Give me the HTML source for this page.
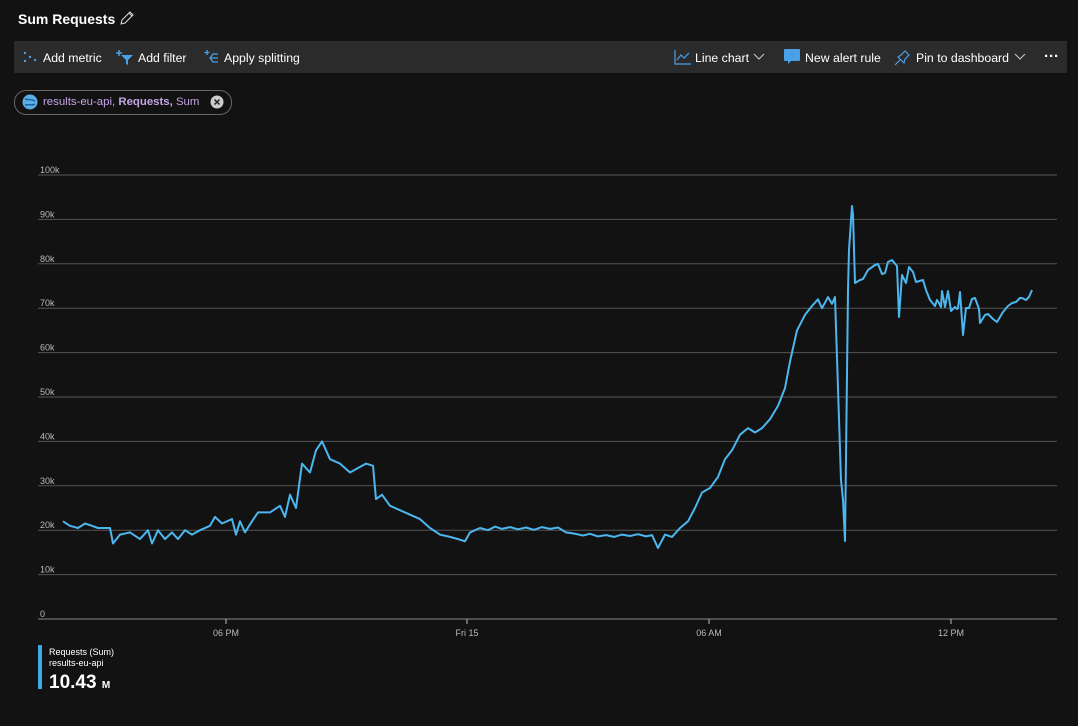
<!DOCTYPE html>
<html><head><meta charset="utf-8"><style>
body{margin:0;width:1078px;height:726px;background:#121212;font-family:"Liberation Sans",sans-serif;color:#fff;overflow:hidden;position:relative}
.title{position:absolute;left:18px;top:10px;font-size:14px;font-weight:bold}
.bar{position:absolute;left:14px;top:41px;width:1053px;height:32px;background:#2b2b2b}
.bi{position:absolute;top:10px;font-size:12.3px;color:#fff;white-space:nowrap}
.pill{position:absolute;left:14px;top:90px;width:216px;height:23px;border:1px solid #666;border-radius:12px;font-size:11.4px;color:#c5a3e6}
</style></head><body>
<div class="title">Sum Requests <svg width="16" height="16" viewBox="0 0 16 16" style="vertical-align:-2px"><path d="M2 14l1-4 8-8 3 3-8 8z M10 3l3 3" fill="none" stroke="#ddd" stroke-width="1"/></svg></div>
<div class="bar">
<svg class="bi" style="left:8px;top:9px" width="16" height="14"><circle cx="3" cy="3" r="1.2" fill="#4aa0e6"/><circle cx="8" cy="7" r="1.2" fill="#4aa0e6"/><circle cx="3" cy="11" r="1.2" fill="#4aa0e6"/><circle cx="13" cy="10" r="1.2" fill="#4aa0e6"/></svg>
<span class="bi" style="left:29px">Add metric</span>
<svg class="bi" style="left:102px;top:8px" width="18" height="16"><path d="M5 6h12l-5 5v5l-2-1v-4z" fill="#4aa0e6"/><path d="M3 1v6M0 4h6" stroke="#4aa0e6" stroke-width="1.5"/></svg>
<span class="bi" style="left:124px">Add filter</span>
<svg class="bi" style="left:190px;top:8px" width="16" height="16"><path d="M3 1v5M0.5 3.5h5M14 5h-5l-3 4 3 4h5M6 9h8" fill="none" stroke="#4aa0e6" stroke-width="1.3"/></svg>
<span class="bi" style="left:210px">Apply splitting</span>
<svg class="bi" style="left:660px;top:8px" width="18" height="16"><path d="M1 1v14h16M3 11l4-5 3 3 5-5" fill="none" stroke="#4aa0e6" stroke-width="1.2"/></svg>
<span class="bi" style="left:681px">Line chart</span>
<svg class="bi" style="left:739px;top:12px" width="12" height="8"><path d="M1 1l5 5 5-5" fill="none" stroke="#ccc"/></svg>
<svg class="bi" style="left:769px;top:7px" width="18" height="18"><path d="M2 1h14a1 1 0 011 1v10a1 1 0 01-1 1h-8l-3 3v-3h-3a1 1 0 01-1-1v-10a1 1 0 011-1z" fill="#4aa0e6"/></svg>
<span class="bi" style="left:791px">New alert rule</span>
<svg class="bi" style="left:880px;top:8px" width="18" height="17"><path d="M1 16l5-5M4 8l6 6 1-4 4-4-4-4-4 4z" fill="none" stroke="#4aa0e6" stroke-width="1.2"/></svg>
<span class="bi" style="left:902px">Pin to dashboard</span>
<svg class="bi" style="left:1000px;top:12px" width="12" height="8"><path d="M1 1l5 5 5-5" fill="none" stroke="#ccc"/></svg>
<span class="bi" style="left:1030px;top:7px;font-size:15px;font-weight:bold">···</span>
</div>
<div class="pill">
<svg style="position:absolute;left:7px;top:3px" width="16" height="16"><circle cx="8" cy="8" r="7.5" fill="#5aaee8"/><path d="M3 5c3 1 7 0 10 2M3 11c3-1 7 1 10-1" stroke="#1d5f99" stroke-width="1.5" fill="none"/></svg>
<span style="position:absolute;left:28px;top:5px">results-eu-api, <b>Requests,</b> Sum</span>
<svg style="position:absolute;left:195px;top:4px" width="14" height="14"><circle cx="7" cy="7" r="6.5" fill="#ccc"/><path d="M4.5 4.5l5 5M9.5 4.5l-5 5" stroke="#222" stroke-width="1.5"/></svg>
</div>
<svg id="ch" width="1078" height="726" style="position:absolute;left:0;top:0"></svg>
<div style="position:absolute;left:38px;top:645px;width:4px;height:44px;background:#3ca8e6"></div>
<div style="position:absolute;left:49px;top:647px;font-size:9px;line-height:11px">Requests (Sum)<br>results-eu-api</div>
<div style="position:absolute;left:49px;top:672px;font-size:19px;font-weight:bold">10.43 <span style="font-size:10px">M</span></div>
<script>
var s='';
for(var i=0;i<=10;i++){var y=619-i*44.4;s+='<line x1="38" x2="1057" y1="'+y+'" y2="'+y+'" stroke="'+(i==0?'#888':'#555')+'" stroke-width="1"/>';
s+='<text x="40" y="'+(y-2)+'" font-size="9" fill="#bbb" font-family="Liberation Sans">'+(i==0?'0':i*10+'k')+'</text>';}
[[226,'06 PM'],[467,'Fri 15'],[709,'06 AM'],[951,'12 PM']].forEach(function(t){s+='<line x1="'+t[0]+'" x2="'+t[0]+'" y1="619" y2="624" stroke="#bbb"/><text x="'+t[0]+'" y="636" font-size="9" fill="#bbb" text-anchor="middle" font-family="Liberation Sans">'+t[1]+'</text>';});
var v=[63,22,70,21,78,20.5,85,21.5,92,21,98,20.5,110,20.5,113,17,120,19,130,19.5,140,18,148,20,152,17,158,20,165,18,172,19.5,178,18,185,20,192,19,200,20,210,21,215,23,222,21.5,232,22.5,236,19,240,22,245,19.5,252,22,258,24,270,24,280,25.5,285,23,290,28,296,25,302,35,310,33,316,38,322,40,330,36,340,35,350,33,358,34,366,35,373,34.5,376,27,382,28,390,25.5,400,24.5,410,23.5,420,22.5,430,20.5,440,19,450,18.5,458,18,465,17.5,470,19.5,480,20.5,488,20,495,20.8,502,20.3,510,20.7,518,20.2,526,20.6,534,20.1,542,20.7,550,20.3,558,20.6,566,19.5,575,19.2,583,18.8,590,19.2,598,18.6,606,18.9,614,18.5,622,19,630,18.7,638,19.1,646,18.6,652,18.9,658,16,665,19,672,18.5,680,20.5,688,22,695,25,702,28.5,710,29.5,718,32,725,36,732,38,740,41.5,748,43,755,42,762,43,770,45,778,48,785,52,790,58,797,65,805,68.5,812,70.5,818,72,822,70,828,72.5,832,71];
var p=[];for(var i=0;i<v.length;i+=2)p.push(v[i]+','+(619-4.44*v[i+1]).toFixed(1));
var r=[835,297,841,480,843,500,845,541,848,290,849,250,852,206,853,215,855,283,860,280,863,279,868,270,875,265,878,264,882,274,885,273,888,262,892,260,897,266,899,317,902,275,906,283,909,267,913,272,916,282,923,280,926,290,930,300,935,306,937,300,939,303,941,307,942,291,945,307,948,291,951,311,955,307,957,309,958,308,960,292,963,335,966,308,969,308,972,299,975,298,979,309,980,323,985,315,988,314,993,319,997,322,1003,312,1008,306,1012,303,1016,302,1018,300,1020,298,1022,298,1026,300,1029,297,1032,290];
for(var i=0;i<r.length;i+=2)p.push(r[i]+','+r[i+1]);
s+='<polyline points="'+p.join(' ')+'" fill="none" stroke="#4cb6ee" stroke-width="2" stroke-linejoin="round"/>';
document.getElementById('ch').innerHTML=s;
</script>
</body></html>
